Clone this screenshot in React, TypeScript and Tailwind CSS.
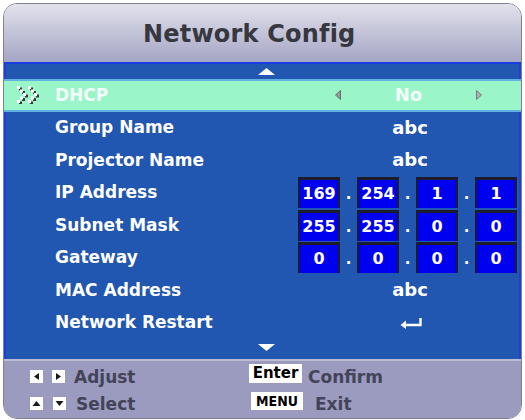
import React from 'react';

type Row = {
  label: string;
  value?: string;
  ip?: number[];
  select?: boolean;
  enter?: boolean;
};

const rows: Row[] = [
  { label: 'DHCP', value: 'No', select: true },
  { label: 'Group Name', value: 'abc' },
  { label: 'Projector Name', value: 'abc' },
  { label: 'IP Address', ip: [169, 254, 1, 1] },
  { label: 'Subnet Mask', ip: [255, 255, 0, 0] },
  { label: 'Gateway', ip: [0, 0, 0, 0] },
  { label: 'MAC Address', value: 'abc' },
  { label: 'Network Restart', enter: true },
];

function ChevronIcon() {
  const xs = [0, 3, 6, 3, 0];
  const ys = [0, 3.5, 7, 10.5, 14];
  return (
    <svg width="26" height="18" viewBox="0 0 26 18">
      {[0, 11].map((ox) =>
        xs.map((x, i) => (
          <g key={`${ox}-${i}`}>
            <rect x={ox + x + 2} y={ys[i] + 1.5} width="3" height="3" fill="#3a3a3a" />
            <rect x={ox + x} y={ys[i]} width="3" height="3" fill="#ffffff" />
          </g>
        ))
      )}
    </svg>
  );
}

function SmallArrow({ dir }: { dir: 'left' | 'right' }) {
  return (
    <svg width="6" height="10" viewBox="0 0 6 10">
      {dir === 'left' ? (
        <polygon points="5.5,0.5 0.5,5 5.5,9.5" fill="#9a9a9a" stroke="#6a6a6a" strokeWidth="1" />
      ) : (
        <polygon points="0.5,0.5 5.5,5 0.5,9.5" fill="#b0b0b0" stroke="#7a7a7a" strokeWidth="1" />
      )}
    </svg>
  );
}

function EnterArrow() {
  return (
    <svg width="23" height="12" viewBox="0 0 23 12">
      <path d="M20.5 1 V8 H5" stroke="#ffffff" strokeWidth="2.4" fill="none" />
      <polygon points="0.5,8 6,3.5 6,12" fill="#ffffff" />
    </svg>
  );
}

function KeySquare({ dir }: { dir: 'left' | 'right' | 'up' | 'down' }) {
  const pts = {
    left: '9,3 4,6.5 9,10',
    right: '4,3 9,6.5 4,10',
    up: '2.5,9 6.5,4 10.5,9',
    down: '2.5,4 6.5,9 10.5,4',
  }[dir];
  return (
    <svg width="13" height="13" viewBox="0 0 13 13" className="shrink-0">
      <rect width="13" height="13" fill="#ffffff" />
      <polygon points={pts} fill="#1a1a1a" />
    </svg>
  );
}

function IpBox({ n }: { n: number }) {
  return (
    <div className="w-[42px] h-[31px] shrink-0 bg-[#0000f0] border-t-[3px] border-l-2 border-r-2 border-[#1c1c2c] flex items-center justify-center text-white text-[16px] leading-none">
      {n}
    </div>
  );
}

function MenuRow({ row }: { row: Row }) {
  const selected = row.select;
  return (
    <div
      className={
        selected
          ? 'h-[32.5px] -mx-[2px] px-[2px] flex items-center bg-[#9af5c9] border-y-2 border-[#5fb2e2]'
          : 'h-[32.5px] flex items-center'
      }
    >
      <div className="w-[292px] shrink-0 flex items-center">
        <div className="w-[49px] pl-[11px] flex items-center">{selected && <ChevronIcon />}</div>
        <span className={selected ? 'text-[17px] leading-none text-[#f3fff9]' : 'text-[17px] leading-none text-white'}>
          {row.label}
        </span>
      </div>
      <div className="flex-1 flex items-center">
        {row.select && (
          <div className="w-[224px] flex items-center">
            <div className="w-[43px] flex justify-end">
              <SmallArrow dir="left" />
            </div>
            <span className="flex-1 text-center text-[18px] leading-none text-[#f3fff9]">{row.value}</span>
            <div className="w-[46px] flex">
              <SmallArrow dir="right" />
            </div>
          </div>
        )}
        {!row.select && row.value && (
          <span className="w-[224px] text-center text-[18px] leading-none text-white">{row.value}</span>
        )}
        {row.enter && (
          <div className="w-[224px] flex justify-center pl-[2px]">
            <EnterArrow />
          </div>
        )}
        {row.ip && (
          <div className="flex items-center">
            {row.ip.map((n, i) => (
              <React.Fragment key={i}>
                {i > 0 && <span className="w-[17px] text-center text-white text-[15px] leading-none pt-[4px]">.</span>}
                <IpBox n={n} />
              </React.Fragment>
            ))}
          </div>
        )}
      </div>
    </div>
  );
}

export default function App() {
  return (
    <div className="w-[525px] h-[420px] bg-white pt-[3px] pl-[3px] overflow-hidden font-['DejaVu_Sans',sans-serif] font-bold">
      <div className="w-[519px] h-[416px] border border-[#80808f] rounded-[14px] overflow-hidden flex flex-col">
        <header className="h-[58px] shrink-0 bg-gradient-to-b from-[#e2e2ec] to-[#a5a5c5] flex items-center pl-[139px] pt-[2px]">
          <h1 className="text-[24px] leading-none text-[#37373f] tracking-[0.2px]">Network Config</h1>
        </header>

        <section className="h-[297px] shrink-0 bg-[#2156b1] border-t-2 border-x-2 border-[#1a3ee0] flex flex-col">
          <div className="h-[15px] shrink-0 flex items-center pl-[252px]">
            <svg width="17" height="7" viewBox="0 0 17 7">
              <polygon points="0,7 8.5,0 17,7" fill="#ffffff" />
            </svg>
          </div>
          {rows.map((row) => (
            <MenuRow key={row.label} row={row} />
          ))}
          <div className="h-[20px] shrink-0 flex items-start pt-[5px] pl-[252px]">
            <svg width="17" height="7" viewBox="0 0 17 7">
              <polygon points="0,0 8.5,7 17,0" fill="#ffffff" />
            </svg>
          </div>
        </section>

        <footer className="flex-1 bg-[#9b9bbf] border-t-2 border-[#bcbcd4] pt-[3px] text-[#434359]">
          <div className="h-[19px] flex items-end">
            <div className="w-[245px] shrink-0 flex items-end pl-[26px]">
              <KeySquare dir="left" />
              <span className="ml-[9px]">
                <KeySquare dir="right" />
              </span>
              <span className="ml-[9px] text-[17px] leading-[17px] -mb-[3px]">Adjust</span>
            </div>
            <span className="w-[53px] h-[19px] bg-white text-black text-[15px] leading-[19px] text-center">Enter</span>
            <span className="ml-[6px] text-[17px] leading-[17px] -mb-[3px]">Confirm</span>
          </div>
          <div className="h-[18px] mt-[9px] flex items-end">
            <div className="w-[247px] shrink-0 flex items-end pl-[26px]">
              <KeySquare dir="up" />
              <span className="ml-[10px]">
                <KeySquare dir="down" />
              </span>
              <span className="ml-[10px] text-[17px] leading-[17px] -mb-[3px]">Select</span>
            </div>
            <span className="w-[52px] h-[18px] bg-white text-black text-[14px] leading-[18px] text-center font-['DejaVu_Sans_Condensed','DejaVu_Sans',sans-serif]">
              MENU
            </span>
            <span className="ml-[12px] text-[17px] leading-[17px] -mb-[3px]">Exit</span>
          </div>
        </footer>
      </div>
    </div>
  );
}
